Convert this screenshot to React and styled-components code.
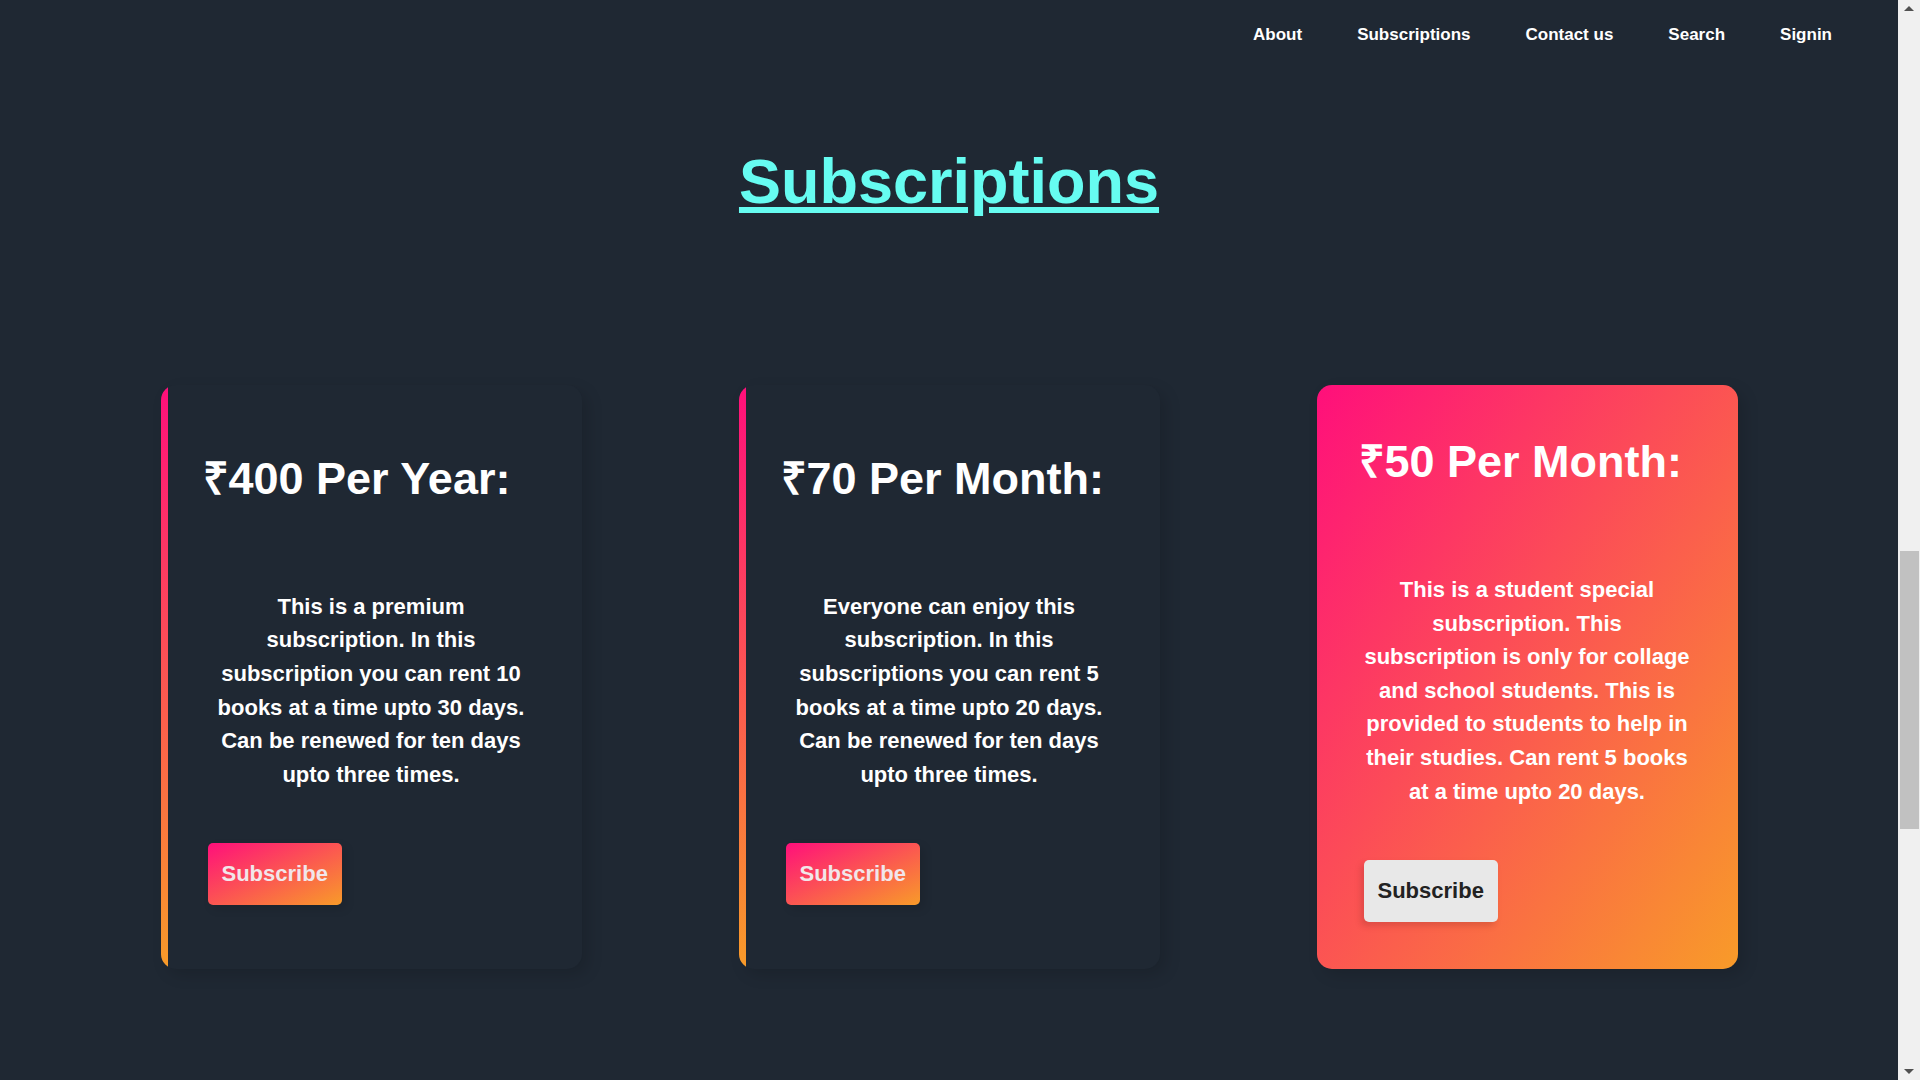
import React from "react";
import styled, { createGlobalStyle, css } from "styled-components";

const PINK = "#ff0f7b";
const ORANGE = "#f89b29";

const plans = [
  {
    price: "₹400 Per Year:",
    text:
      "This is a premium subscription. In this subscription you can rent 10 books at a time upto 30 days. Can be renewed for ten days upto three times.",
  },
  {
    price: "₹70 Per Month:",
    text:
      "Everyone can enjoy this subscription. In this subscriptions you can rent 5 books at a time upto 20 days. Can be renewed for ten days upto three times.",
  },
  {
    price: "₹50 Per Month:",
    text:
      "This is a student special subscription. This subscription is only for collage and school students. This is provided to students to help in their studies. Can rent 5 books at a time upto 20 days.",
    featured: true,
  },
];

const links = ["About", "Subscriptions", "Contact us", "Search", "Signin"];

const App = () => {
  return (
    <>
      <GlobalStyle />
      <Page>
        <Main>
          <Nav>
            {links.map((link) => (
              <NavLink key={link} href="#">
                {link}
              </NavLink>
            ))}
          </Nav>
          <Heading>Subscriptions</Heading>
          <CardRow>
            {plans.map(({ price, text, featured }) => (
              <Card key={price} featured={featured}>
                <Price>{price}</Price>
                <Description>{text}</Description>
                <SubscribeButton featured={featured}>Subscribe</SubscribeButton>
              </Card>
            ))}
          </CardRow>
        </Main>
        <ScrollRail>
          <RailArrow />
          <RailTrack>
            <RailThumb />
          </RailTrack>
          <RailArrow down />
        </ScrollRail>
      </Page>
    </>
  );
};

export default App;

const GlobalStyle = createGlobalStyle`
  html,
  body {
    margin: 0;
    padding: 0;
    height: 100%;
    overflow: hidden;
    background: #1f2833;
    font-family: "Liberation Sans", Arial, sans-serif;
  }

  * {
    box-sizing: border-box;
  }
`;

const Page = styled.div`
  display: flex;
  height: 100vh;
`;

const Main = styled.main`
  flex: 1;
  display: flex;
  flex-direction: column;
  align-items: center;
`;

const Nav = styled.nav`
  align-self: stretch;
  display: flex;
  justify-content: flex-end;
  gap: 55px;
  height: 60px;
  padding: 25px 66px 0 0;
`;

const NavLink = styled.a`
  font-size: 17px;
  font-weight: 700;
  color: #fff;
  text-decoration: none;
  line-height: normal;
`;

const Heading = styled.h1`
  margin: 85px 0 0;
  font-size: 63px;
  font-weight: 700;
  line-height: normal;
  color: #66fcf1;
  text-decoration: underline;
`;

const CardRow = styled.section`
  display: flex;
  justify-content: center;
  align-items: stretch;
  gap: 157px;
  margin-top: 168px;
`;

const Card = styled.div`
  position: relative;
  overflow: hidden;
  width: 421px;
  padding: 44px 45px 47px;
  display: flex;
  flex-direction: column;
  justify-content: center;
  border-radius: 15px;
  background: #1f2833;
  box-shadow: 6px 6px 16px rgba(0, 0, 0, 0.14);
  color: #fff;

  &::before {
    content: "";
    position: absolute;
    top: 0;
    bottom: 0;
    left: 0;
    width: 7px;
    background: linear-gradient(to bottom, ${PINK}, ${ORANGE});
  }

  ${({ featured }) =>
    featured &&
    css`
      background: linear-gradient(to bottom right, ${PINK}, ${ORANGE});

      &::before {
        display: none;
      }
    `}
`;

const Price = styled.h2`
  margin: 0 0 0 -3px;
  font-size: 45px;
  font-weight: 700;
  line-height: normal;
  white-space: nowrap;
`;

const Description = styled.p`
  margin: 83px 0 0;
  padding: 0 2.5px;
  font-size: 22px;
  font-weight: 700;
  line-height: 33.6px;
  text-align: center;
`;

const SubscribeButton = styled.button`
  align-self: flex-start;
  margin: 52px 0 0 2px;
  padding: 18px 14px;
  border: none;
  border-radius: 5px;
  font-family: inherit;
  font-size: 22px;
  font-weight: 700;
  line-height: normal;
  cursor: pointer;
  color: #f1e6ea;
  background: linear-gradient(to bottom right, ${PINK}, ${ORANGE});
  box-shadow: 4px 4px 10px rgba(0, 0, 0, 0.12);

  ${({ featured }) =>
    featured &&
    css`
      color: #222;
      background: #e8e8e8;
      box-shadow: -3px 4px 6px rgba(120, 30, 30, 0.22);
    `}
`;

// Browser scrollbar seen on the right of the screenshot
const ScrollRail = styled.div`
  width: 22px;
  display: flex;
  flex-direction: column;
  background: #f0f0f0;
`;

const RailArrow = styled.div`
  height: 17px;
  display: flex;
  align-items: center;
  justify-content: center;

  &::after {
    content: "";
    border-left: 5px solid transparent;
    border-right: 5px solid transparent;
    ${({ down }) =>
      down
        ? css`
            border-top: 5px solid #505050;
          `
        : css`
            border-bottom: 5px solid #505050;
          `}
  }
`;

const RailTrack = styled.div`
  flex: 1;
  padding: 534px 1px 0 2px;
`;

const RailThumb = styled.div`
  height: 278px;
  background: #c1c1c1;
`;
